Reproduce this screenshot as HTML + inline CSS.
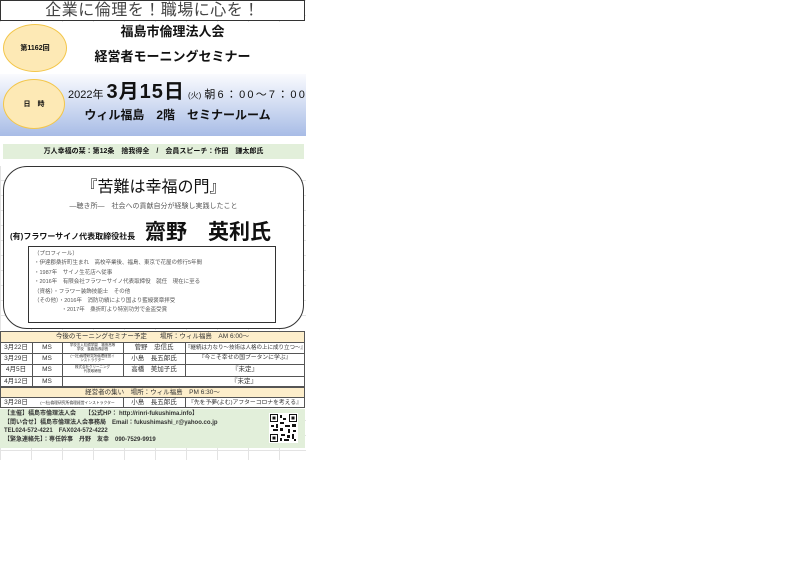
<!DOCTYPE html>
<html><head><meta charset="utf-8"><style>
*{margin:0;padding:0;box-sizing:border-box}
body{width:800px;height:566px;background:#fff;position:relative;overflow:hidden;font-family:"Liberation Sans","Noto Sans CJK JP",sans-serif;color:#111}
.a{position:absolute;white-space:nowrap}
.grid{position:absolute;left:0;top:0;width:306px;height:460px;background-image:linear-gradient(#e3e3e3 1px,transparent 1px),linear-gradient(90deg,#e3e3e3 1px,transparent 1px);background-size:31px 15px,31px 15px}
.oval{position:absolute;border-radius:50%;background:#fde9b5;border:1px solid #f3c64a;display:flex;align-items:center;justify-content:center;font-weight:bold;font-size:7px}
.c{position:absolute;display:flex;align-items:center;justify-content:center;text-align:center;font-size:6.5px;color:#333;line-height:1.1}
.b{position:absolute;border:1px solid #333}
</style></head><body>
<div class="grid"></div>
<div class="a" style="left:0;top:0;width:305px;height:21px;border:1px solid #333;background:#fff;text-align:center;font-size:16px;line-height:20px;color:#444;letter-spacing:0.5px">企業に倫理を！職場に心を！</div>
<div style="position:absolute;left:0;top:22px;width:306px;height:52px;background:#fff"></div>
<div class="oval" style="left:3px;top:24px;width:64px;height:48px">第1162回</div>
<div class="a" style="left:70px;width:205px;top:24px;text-align:center;font-size:13px;font-weight:bold;line-height:16px">福島市倫理法人会</div>
<div class="a" style="left:70px;width:205px;top:49px;text-align:center;font-size:13px;font-weight:bold;line-height:16px">経営者モーニングセミナー</div>
<div style="position:absolute;left:0;top:74px;width:306px;height:62px;background:linear-gradient(#fafbfe,#a8bce6)"></div>
<div class="oval" style="left:3px;top:79px;width:62px;height:50px">日　時</div>
<div class="a" style="left:68px;top:81px;font-size:11px;line-height:22px">2022年 <b style="font-size:20px;letter-spacing:1px">3月15日</b> <span style="font-size:8px">(火)</span> <span style="letter-spacing:2.2px">朝6：00～7：00</span></div>
<div class="a" style="left:70px;width:215px;top:107px;text-align:center;font-size:12px;font-weight:bold;line-height:16px">ウィル福島　2階　セミナールーム</div>
<div style="position:absolute;left:0;top:136px;width:306px;height:30px;background:#fff"></div>
<div class="a" style="left:3px;top:144px;width:301px;height:15px;background:#e2efda;text-align:center;font-size:7px;font-weight:bold;line-height:15px">万人幸福の栞：第12条　捨我得全　/　会員スピーチ：作田　謙太郎氏</div>
<div style="position:absolute;left:3px;top:166px;width:301px;height:163px;border:1px solid #333;border-radius:24px;background:#fff"></div>
<div class="a" style="left:3px;width:301px;top:178px;text-align:center;font-size:16px;line-height:20px">『苦難は幸福の門』</div>
<div class="a" style="left:3px;width:301px;top:202px;text-align:center;font-size:7px;color:#555;line-height:10px">―聴き所―　社会への貢献自分が経験し実践したこと</div>
<div class="a" style="left:10px;top:231px;font-size:8px;font-weight:bold;line-height:12px">(有)フラワーサイノ代表取締役社長</div>
<div class="a" style="left:145px;top:220px;font-size:21px;font-weight:bold;line-height:26px">齋野　英利氏</div>
<div class="b" style="left:28px;top:246px;width:248px;height:77px"></div>
<div class="a" style="left:34px;top:250px;font-size:5.5px;color:#555;line-height:9.4px">（プロフィール）<br>・伊達郡桑折町生まれ　高校卒業後、福島、東京で花屋の修行5年間<br>・1987年　サイノ生花店へ従事<br>・2016年　有限会社フラワーサイノ代表取締役　就任　現在に至る<br>（資格）・フラワー装飾技能士　その他<br>（その他）・2016年　消防功績により国より藍綬褒章拝受<br>　　　　　・2017年　桑折町より特別功労で金盃受賞</div>
<div style="position:absolute;left:0;top:330px;width:306px;height:80px;background:#fff"></div>
<div class="c" style="left:0;top:331px;width:305px;height:12px;background:#fdeecb;border:1px solid #555;font-size:6.5px">今後のモーニングセミナー予定　　場所：ウィル福島　AM 6:00～</div>
<div class="c" style="left:0;top:387px;width:305px;height:11px;background:#fdeecb;border:1px solid #555;font-size:6.5px">経営者の集い　場所：ウィル福島　PM 6:30～</div>
<div style="position:absolute;left:0;top:343px;width:305px;height:44px;border:1px solid #555;border-top:none"></div>
<div style="position:absolute;left:0;top:398px;width:305px;height:10px;border:1px solid #555;border-top:none"></div>
<div style="position:absolute;left:0;top:353px;width:305px;border-top:1px solid #555"></div>
<div style="position:absolute;left:0;top:364px;width:305px;border-top:1px solid #555"></div>
<div style="position:absolute;left:0;top:376px;width:305px;border-top:1px solid #555"></div>
<div style="position:absolute;left:32px;top:343px;height:44px;border-left:1px solid #555"></div>
<div style="position:absolute;left:62px;top:343px;height:44px;border-left:1px solid #555"></div>
<div style="position:absolute;left:123px;top:343px;height:33px;border-left:1px solid #555"></div>
<div style="position:absolute;left:185px;top:343px;height:33px;border-left:1px solid #555"></div>
<div style="position:absolute;left:123px;top:398px;height:10px;border-left:1px solid #555"></div>
<div style="position:absolute;left:185px;top:398px;height:10px;border-left:1px solid #555"></div>
<div class="c" style="left:0;top:343px;width:32px;height:10px">3月22日</div>
<div class="c" style="left:0;top:353px;width:32px;height:11px">3月29日</div>
<div class="c" style="left:0;top:364px;width:32px;height:12px">4月5日</div>
<div class="c" style="left:0;top:376px;width:32px;height:11px">4月12日</div>
<div class="c" style="left:0;top:398px;width:32px;height:10px">3月28日</div>
<div class="c" style="left:32px;top:343px;width:30px;height:10px">MS</div>
<div class="c" style="left:32px;top:353px;width:30px;height:11px">MS</div>
<div class="c" style="left:32px;top:364px;width:30px;height:12px">MS</div>
<div class="c" style="left:32px;top:376px;width:30px;height:11px">MS</div>
<div class="c" style="left:62px;top:343px;width:61px;height:10px;font-size:3.5px">学校法人松韻学園　福島高等<br>学校　進路指導部長</div>
<div class="c" style="left:62px;top:353px;width:61px;height:11px;font-size:3.5px">(一社)倫理研究所倫理経営イ<br>ンストラクター</div>
<div class="c" style="left:62px;top:364px;width:61px;height:12px;font-size:3.5px">株式会社クリーニング<br>代表取締役</div>
<div class="c" style="left:32px;top:398px;width:91px;height:10px;font-size:3.8px">(一社)倫理研究所倫理経営インストラクター</div>
<div class="c" style="left:123px;top:343px;width:62px;height:10px">菅野　忠信氏</div>
<div class="c" style="left:123px;top:353px;width:62px;height:11px">小島　長五郎氏</div>
<div class="c" style="left:123px;top:364px;width:62px;height:12px">高橋　美加子氏</div>
<div class="c" style="left:123px;top:398px;width:62px;height:10px">小島　長五郎氏</div>
<div class="c" style="left:185px;top:343px;width:120px;height:10px;font-size:5.5px">『継続は力なり～技術は人格の上に成り立つ～』</div>
<div class="c" style="left:185px;top:353px;width:120px;height:11px;font-size:5.8px">『今こそ幸せの国ブータンに学ぶ』</div>
<div class="c" style="left:185px;top:364px;width:120px;height:12px">『未定』</div>
<div class="c" style="left:62px;top:376px;width:243px;height:11px;justify-content:flex-end;padding-right:48px">『未定』</div>
<div class="c" style="left:185px;top:398px;width:120px;height:10px;font-size:5.8px">『先を予夢(よむ)アフターコロナを考える』</div>
<div style="position:absolute;left:0;top:409px;width:305px;height:39px;background:#e2efda"></div>
<div class="a" style="left:4px;top:410px;font-size:6px;font-weight:bold;line-height:8.6px;color:#333">【主催】福島市倫理法人会　　【公式HP： http://rinri-fukushima.info】<br>【問い合せ】福島市倫理法人会事務局　Email：fukushimashi_r@yahoo.co.jp<br>TEL024-572-4221　FAX024-572-4222<br>【緊急連絡先】：専任幹事　丹野　友幸　090-7529-9919</div>
<svg style="position:absolute;left:269px;top:413px" width="29" height="30" viewBox="0 0 29 30">
<rect width="29" height="30" fill="#fff"/>
<g fill="#111"><rect x="1" y="1" width="8" height="8"/><rect x="20" y="1" width="8" height="8"/><rect x="1" y="21" width="8" height="8"/></g>
<g fill="#fff"><rect x="2" y="2" width="6" height="6"/><rect x="21" y="2" width="6" height="6"/><rect x="2" y="22" width="6" height="6"/></g>
<g fill="#111"><rect x="3.5" y="3.5" width="3" height="3"/><rect x="22.5" y="3.5" width="3" height="3"/><rect x="3.5" y="23.5" width="3" height="3"/>
<rect x="11" y="2" width="2" height="3"/><rect x="14" y="5" width="3" height="2"/><rect x="11" y="9" width="4" height="2"/><rect x="2" y="12" width="3" height="2"/><rect x="7" y="11" width="2" height="4"/><rect x="16" y="12" width="5" height="2"/><rect x="23" y="11" width="4" height="3"/><rect x="11" y="15" width="3" height="3"/><rect x="19" y="16" width="2" height="4"/><rect x="24" y="17" width="3" height="2"/><rect x="12" y="21" width="4" height="2"/><rect x="18" y="22" width="3" height="3"/><rect x="23" y="21" width="2" height="5"/><rect x="11" y="25" width="2" height="3"/><rect x="15" y="26" width="5" height="2"/><rect x="25" y="26" width="2" height="2"/><rect x="4" y="16" width="5" height="2"/></g>
</svg>
</body></html>
